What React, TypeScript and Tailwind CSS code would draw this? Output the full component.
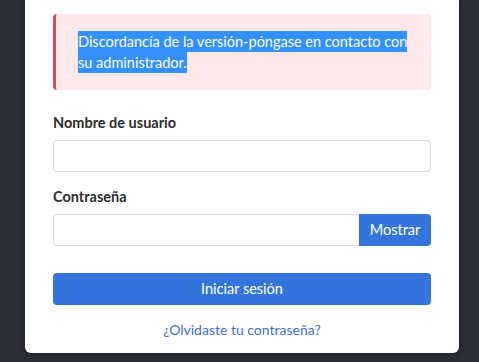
export default function App() {
  return (
    <div
      className="min-h-[362px] bg-[#2b2e36] pl-[25px] pr-[20px] pb-[9px]"
      style={{ fontFamily: 'Lato, "Noto Sans", sans-serif' }}
    >
      <div className="bg-white rounded-b-[6px] px-[28px] pt-[14px] pb-[13px] shadow-[0_0_8px_rgba(0,0,0,0.35)]">
        {/* Error alert */}
        <div className="h-[76px] rounded-[4px] border-l-[3px] border-[#e8445e] bg-[#fde8ec] pl-[22px] pr-[6px] pt-[17px]">
          <p className="text-[14.5px] leading-[21px] text-white">
            <span className="bg-[#3390ff] py-[2px] box-decoration-clone">
              Discordancía de la versión-póngase en contacto con su administrador.
            </span>
          </p>
        </div>

        <label className="mt-[23px] block text-[14.5px] leading-[20px] font-bold text-[#2d2d2d]">
          Nombre de usuario
        </label>
        <input
          type="text"
          className="mt-[7px] block h-[32px] w-full rounded-[4px] border border-[#d9dcdf] bg-white px-3 text-[14px] outline-none"
        />

        <label className="mt-[15px] block text-[14.5px] leading-[20px] font-bold text-[#2d2d2d]">
          Contraseña
        </label>
        <div className="mt-[7px] flex h-[32px]">
          <input
            type="password"
            className="min-w-0 flex-1 rounded-l-[4px] border border-r-0 border-[#d9dcdf] bg-white px-3 text-[14px] outline-none"
          />
          <button className="w-[72px] rounded-r-[4px] bg-[#3475dd] text-[14.5px] text-white">
            Mostrar
          </button>
        </div>

        <button className="mt-[27px] block h-[32px] w-full rounded-[4px] bg-[#3475dd] text-[14.5px] text-white">
          Iniciar sesión
        </button>

        <div className="mt-[15px] text-center text-[14px] leading-[20px]">
          <a className="text-[#3d6fd8]">¿Olvidaste tu contraseña?</a>
        </div>
      </div>
    </div>
  );
}
